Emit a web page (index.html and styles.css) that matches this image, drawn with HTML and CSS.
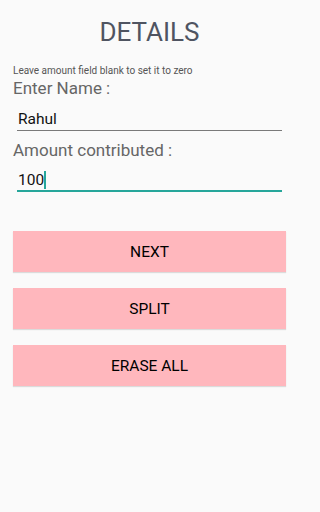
FILE: index.html
```html
<!DOCTYPE html>
<html>
<head>
<meta charset="utf-8">
<link rel="stylesheet" href="styles.css">
</head>
<body>
<div class="screen">
  <h1 class="title">DETAILS</h1>
  <p class="hint">Leave amount field blank to set it to zero</p>
  <label class="label">Enter Name :</label>
  <div class="field"><span class="value">Rahul</span></div>
  <label class="label label-2">Amount contributed :</label>
  <div class="field field-active"><span class="value">100</span><span class="cursor"></span></div>
  <div class="buttons">
    <div class="btn">NEXT</div>
    <div class="btn">SPLIT</div>
    <div class="btn">ERASE ALL</div>
  </div>
</div>
</body>
</html>
```

FILE: styles.css
```css
html, body {
  margin: 0;
  padding: 0;
  background: #fafafa;
}
.screen {
  width: 299px;
  height: 512px;
  box-sizing: border-box;
  padding: 0 13px;
  font-family: Roboto, "Liberation Sans", sans-serif;
  display: flex;
  flex-direction: column;
}
.title {
  margin: 17px 0 0;
  height: 30px;
  line-height: 30px;
  font-size: 26px;
  font-weight: 400;
  color: #4f5461;
  text-align: center;
}
.hint {
  margin: 18px 0 0;
  font-size: 10px;
  line-height: 12px;
  color: #555;
}
.label {
  display: block;
  margin-top: 1px;
  font-size: 17px;
  line-height: 20px;
  color: #666;
}
.label-2 {
  margin-top: 9px;
}
.field {
  margin: 10px 4px 0 4px;
  height: 22px;
  border-bottom: 1px solid #7a7a7a;
  display: flex;
  align-items: center;
  padding-left: 1px;
}
.field-active {
  border-bottom: 2px solid #26a69a;
  height: 21px;
  margin-top: 9px;
}
.value {
  font-size: 15.5px;
  color: #111;
}
.cursor {
  width: 2px;
  height: 18px;
  background: #26a69a;
}
.buttons {
  margin-top: 39px;
  display: flex;
  flex-direction: column;
  gap: 16px;
}
.btn {
  height: 41px;
  background: #ffb7bd;
  display: flex;
  align-items: center;
  justify-content: center;
  font-size: 15.5px;
  font-weight: 400;
  color: #000;
  box-shadow: 0 1px 1px rgba(0,0,0,0.12);
}
```
